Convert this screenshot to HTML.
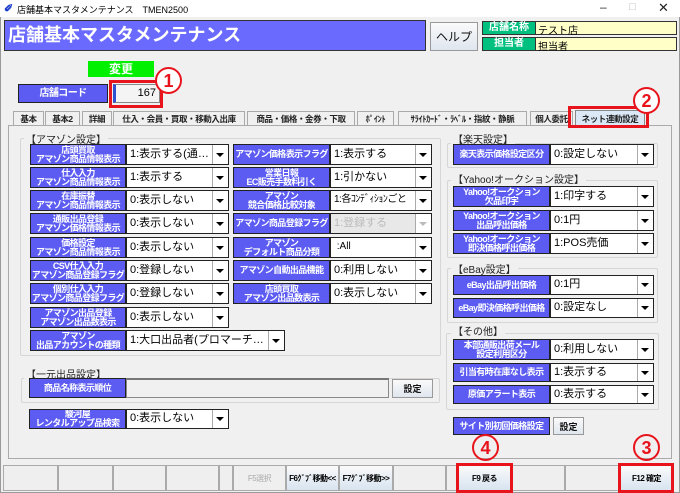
<!DOCTYPE html>
<html><head><meta charset="utf-8">
<style>
*{margin:0;padding:0;box-sizing:border-box}
body{width:680px;height:493px;background:#f0f0f0;font-family:"Liberation Sans","Noto Sans CJK JP",sans-serif;position:relative;overflow:hidden}
.a{position:absolute}
.l{position:absolute;background:#5c5cf2;color:#fff;font-size:9px;line-height:9px;letter-spacing:-0.6px;text-align:center;border:1px solid #222;display:flex;align-items:center;justify-content:center;font-weight:bold;white-space:nowrap;overflow:hidden}
.s{position:absolute;background:#fff;border:1px solid #222;font-size:11px;padding-left:3px;padding-right:16px;color:#000;white-space:nowrap;overflow:hidden;text-overflow:ellipsis;display:block;line-height:18px}
.s::after{content:"";position:absolute;right:0;top:0;bottom:0;width:15px;border-left:1px solid #aaa;background:#fff}
.s b{position:absolute;right:4px;top:50%;margin-top:-2px;width:0;height:0;border-left:4px solid transparent;border-right:4px solid transparent;border-top:4px solid #000;z-index:2}
.g{position:absolute;border:1px solid #d6d6d6;border-radius:2px}
.h{position:absolute;font-size:10px;background:#f0f0f0;padding:0 2px;color:#222}
.btn{position:absolute;background:linear-gradient(#fafafa,#dfe6ee);border:1px solid #999;font-size:9px;font-weight:bold;display:flex;align-items:center;justify-content:center;color:#111}
.fb{position:absolute;top:465px;height:26px;width:54px;border:1px solid #aaa;background:#efefef;font-size:8px;letter-spacing:-0.5px;font-weight:bold;display:flex;align-items:center;justify-content:center;white-space:nowrap;overflow:hidden}
.red{position:absolute;border:3px solid #e8141c}
.c{position:absolute;width:27px;height:27px;border:2.5px solid #e8141c;border-radius:50%;color:#e8141c;font-size:18px;font-weight:bold;display:flex;align-items:center;justify-content:center;background:#fff;line-height:1}
.tab{position:absolute;top:111px;height:15px;border:1px solid #aaa;border-bottom:none;background:#f0f0f0;font-size:8.5px;letter-spacing:-0.4px;font-weight:bold;display:flex;align-items:center;justify-content:center;white-space:nowrap;overflow:hidden;color:#222}
</style></head><body>
<div class="a" style="left:0;top:0;width:680px;height:17px;background:#fff"></div>
<div class="a" style="left:4px;top:2px;font-size:11px;color:#1a3ccc;font-weight:bold">✐</div>
<div class="a" style="left:17px;top:3px;font-size:9px">店舗基本マスタメンテナンス　TMEN2500</div>
<div class="a" style="left:600px;top:0px;font-size:12px;color:#333">–</div>
<div class="a" style="left:629px;top:1px;font-size:11px;color:#bbb">□</div>
<div class="a" style="left:658px;top:0px;font-size:13px;color:#222">✕</div>
<div class="a" style="left:0;top:17px;width:680px;height:476px;border:1px solid #999;border-top:none"></div>
<div class="a" style="left:4px;top:20px;width:422px;height:31px;background:#6a6aff;border:1px solid #333;color:#fff;font-size:18px;font-weight:bold;padding-left:3px;line-height:29px">店舗基本マスタメンテナンス</div>
<div class="btn" style="left:430px;top:22px;width:48px;height:29px;font-size:12px;font-weight:normal">ヘルプ</div>
<div class="a" style="left:482px;top:21px;width:195px;height:14px;background:#ffffc8;border:1px solid #333"></div>
<div class="a" style="left:482px;top:21px;width:54px;height:14px;background:#00c080;color:#fff;font-size:10px;font-weight:bold;text-align:center;line-height:12px;border:1px solid #333">店舗名称</div>
<div class="a" style="left:538px;top:22px;font-size:10px">テスト店</div>
<div class="a" style="left:482px;top:37px;width:195px;height:14px;background:#ffffc8;border:1px solid #333"></div>
<div class="a" style="left:482px;top:37px;width:54px;height:14px;background:#00c080;color:#fff;font-size:10px;font-weight:bold;text-align:center;line-height:12px;border:1px solid #333">担当者</div>
<div class="a" style="left:538px;top:38px;font-size:10px">担当者</div>
<div class="a" style="left:88px;top:61px;width:66px;height:16px;background:#00f000;color:#fff;font-size:12px;font-weight:bold;text-align:center;line-height:16px">変更</div>
<div class="l" style="left:18px;top:84px;width:90px;height:19px;font-size:10px">店舗コード</div>
<div class="a" style="left:113px;top:84px;width:47px;height:19px;background:#f4f4f4;border:1px solid #888;border-left:3px solid #3050d0;font-size:11px;text-align:right;padding-right:3px;line-height:17px">167</div>
<div class="red" style="left:109px;top:80px;width:54px;height:28px"></div>
<div class="c" style="left:155px;top:67px">1</div>
<div class="tab" style="left:13px;width:31px">基本</div>
<div class="tab" style="left:45px;width:35px">基本2</div>
<div class="tab" style="left:82px;width:30px">詳細</div>
<div class="tab" style="left:113px;width:132px">仕入・会員・買取・移動入出庫</div>
<div class="tab" style="left:247px;width:108px">商品・価格・金券・下取</div>
<div class="tab" style="left:357px;width:37px">ﾎﾟｲﾝﾄ</div>
<div class="tab" style="left:398px;width:129px">ｻﾗｲﾄｶｰﾄﾞ・ﾗﾍﾞﾙ・指紋・静脈</div>
<div class="tab" style="left:530px;width:43px">個人委託</div>
<div class="a" style="left:8px;top:125px;width:664px;height:334px;border:1px solid #aaa;background:#f0f0f0"></div>
<div class="tab" style="left:575px;top:110px;width:70px;height:17px;background:#dbe9f7;border-color:#888">ネット連動設定</div>
<div class="red" style="left:568px;top:106px;width:81px;height:22px"></div>
<div class="c" style="left:633px;top:87px">2</div>
<div class="g" style="left:20px;top:138px;width:421px;height:218px"></div>
<div class="h" style="left:24px;top:131px">【アマゾン設定】</div>

<div class="l" style="left:30px;top:144px;width:96px;height:21px">店頭買取<br>アマゾン商品情報表示</div><div class="s" style="left:126px;top:144px;width:103px;height:21px">1:表示する(通常...<b></b></div>
<div class="l" style="left:233px;top:144px;width:97px;height:21px">アマゾン価格表示フラグ</div><div class="s" style="left:330px;top:144px;width:102px;height:21px">1:表示する<b></b></div>
<div class="l" style="left:30px;top:167px;width:96px;height:21px">仕入入力<br>アマゾン商品情報表示</div><div class="s" style="left:126px;top:167px;width:103px;height:21px">1:表示する<b></b></div>
<div class="l" style="left:233px;top:167px;width:97px;height:21px">営業日報<br>EC販売手数料引く</div><div class="s" style="left:330px;top:167px;width:102px;height:21px">1:引かない<b></b></div>
<div class="l" style="left:30px;top:190px;width:96px;height:21px">在庫振替<br>アマゾン商品情報表示</div><div class="s" style="left:126px;top:190px;width:103px;height:21px">0:表示しない<b></b></div>
<div class="l" style="left:233px;top:190px;width:97px;height:21px">アマゾン<br>競合価格比較対象</div><div class="s" style="left:330px;top:190px;width:102px;height:21px;font-size:10px;letter-spacing:-0.5px">1:各ｺﾝﾃﾞｨｼｮﾝごと<b></b></div>
<div class="l" style="left:30px;top:213px;width:96px;height:21px">通販出品登録<br>アマゾン価格情報表示</div><div class="s" style="left:126px;top:213px;width:103px;height:21px">0:表示しない<b></b></div>
<div class="l" style="left:233px;top:213px;width:97px;height:21px">アマゾン商品登録フラグ</div><div class="s" style="left:330px;top:213px;width:102px;height:21px;background:#e8e8e8;color:#bbb">1:登録する<b style="border-top-color:#bbb"></b></div>
<div class="l" style="left:30px;top:237px;width:96px;height:21px">価格設定<br>アマゾン商品情報表示</div><div class="s" style="left:126px;top:237px;width:103px;height:21px">0:表示しない<b></b></div>
<div class="l" style="left:233px;top:237px;width:97px;height:21px">アマゾン<br>デフォルト商品分類</div><div class="s" style="left:330px;top:237px;width:102px;height:21px;font-size:10px">&nbsp;:All<b></b></div>
<div class="l" style="left:30px;top:260px;width:96px;height:21px">CSV仕入入力<br>アマゾン商品登録フラグ</div><div class="s" style="left:126px;top:260px;width:103px;height:21px">0:登録しない<b></b></div>
<div class="l" style="left:233px;top:260px;width:97px;height:21px">アマゾン自動出品機能</div><div class="s" style="left:330px;top:260px;width:102px;height:21px">0:利用しない<b></b></div>
<div class="l" style="left:30px;top:283px;width:96px;height:21px">個別仕入入力<br>アマゾン商品登録フラグ</div><div class="s" style="left:126px;top:283px;width:103px;height:21px">0:登録しない<b></b></div>
<div class="l" style="left:233px;top:283px;width:97px;height:21px">店頭買取<br>アマゾン出品数表示</div><div class="s" style="left:330px;top:283px;width:102px;height:21px">0:表示しない<b></b></div>
<div class="l" style="left:30px;top:307px;width:96px;height:21px">アマゾン出品登録<br>アマゾン出品数表示</div><div class="s" style="left:126px;top:307px;width:103px;height:21px">0:表示しない<b></b></div>
<div class="l" style="left:30px;top:330px;width:96px;height:21px">アマゾン<br>出品アカウントの種類</div><div class="s" style="left:126px;top:330px;width:159px;height:21px">1:大口出品者(プロマーチャント)<b></b></div>

<div class="g" style="left:21px;top:378px;width:419px;height:25px"></div>
<div class="h" style="left:24px;top:366px">【一元出品設定】</div>
<div class="l" style="left:29px;top:378px;width:97px;height:20px">商品名称表示順位</div>
<div class="a" style="left:126px;top:378px;width:263px;height:20px;background:#f0f0f0;border:1px solid #888;border-top:2px solid #777"></div>
<div class="btn" style="left:392px;top:379px;width:41px;height:19px">設定</div>
<div class="l" style="left:29px;top:409px;width:97px;height:20px">駿河屋<br>レンタルアップ品検索</div><div class="s" style="left:126px;top:409px;width:103px;height:20px;line-height:17px">0:表示しない<b></b></div>

<div class="g" style="left:447px;top:143px;width:211px;height:25px"></div>
<div class="h" style="left:451px;top:131px">【楽天設定】</div>
<div class="l" style="left:453px;top:144px;width:97px;height:21px">楽天表示価格設定区分</div><div class="s" style="left:550px;top:144px;width:104px;height:21px">0:設定しない<b></b></div>

<div class="g" style="left:447px;top:180px;width:211px;height:78px"></div>
<div class="h" style="left:451px;top:171px">【Yahoo!オークション設定】</div>
<div class="l" style="left:453px;top:186px;width:97px;height:21px">Yahoo!オークション<br>欠品印字</div><div class="s" style="left:550px;top:186px;width:104px;height:21px">1:印字する<b></b></div>
<div class="l" style="left:453px;top:210px;width:97px;height:21px">Yahoo!オークション<br>出品呼出価格</div><div class="s" style="left:550px;top:210px;width:104px;height:21px">0:1円<b></b></div>
<div class="l" style="left:453px;top:233px;width:97px;height:21px">Yahoo!オークション<br>即決価格呼出価格</div><div class="s" style="left:550px;top:233px;width:104px;height:21px">1:POS売価<b></b></div>

<div class="g" style="left:447px;top:268px;width:211px;height:55px"></div>
<div class="h" style="left:451px;top:261px">【eBay設定】</div>
<div class="l" style="left:453px;top:275px;width:97px;height:20px">eBay出品呼出価格</div><div class="s" style="left:550px;top:275px;width:104px;height:20px;line-height:17px">0:1円<b></b></div>
<div class="l" style="left:453px;top:298px;width:97px;height:20px">eBay即決価格呼出価格</div><div class="s" style="left:550px;top:298px;width:104px;height:20px;line-height:17px">0:設定なし<b></b></div>

<div class="g" style="left:446px;top:333px;width:213px;height:77px"></div>
<div class="h" style="left:451px;top:323px">【その他】</div>
<div class="l" style="left:453px;top:339px;width:97px;height:21px">本部通販出荷メール<br>設定利用区分</div><div class="s" style="left:550px;top:339px;width:104px;height:21px">0:利用しない<b></b></div>
<div class="l" style="left:453px;top:363px;width:97px;height:19px">引当有時在庫なし表示</div><div class="s" style="left:550px;top:363px;width:104px;height:19px;line-height:16px">1:表示する<b></b></div>
<div class="l" style="left:453px;top:385px;width:97px;height:19px">原価アラート表示</div><div class="s" style="left:550px;top:385px;width:104px;height:19px;line-height:16px">0:表示する<b></b></div>
<div class="l" style="left:453px;top:417px;width:97px;height:18px">サイト別初回価格設定</div>
<div class="btn" style="left:553px;top:417px;width:31px;height:18px">設定</div>

<div class="fb" style="left:3px;width:55px"></div>
<div class="fb" style="left:58px;width:55px"></div>
<div class="fb" style="left:113px;width:53px"></div>
<div class="fb" style="left:166px;width:53px"></div>
<div class="fb" style="left:219px;width:14px"></div>
<div class="fb" style="left:233px;width:53px;color:#aaa;font-weight:normal">F5選択</div>
<div class="fb" style="left:286px;width:53px;background:linear-gradient(#fafafa,#d8e4f0)">F6ｸﾞﾌﾞ移動&lt;&lt;</div>
<div class="fb" style="left:339px;width:54px;background:linear-gradient(#fafafa,#d8e4f0)">F7ｸﾞﾌﾞ移動&gt;&gt;</div>
<div class="fb" style="left:393px;width:53px"></div>
<div class="fb" style="left:446px;width:12px"></div>
<div class="fb" style="left:458px;width:53px;background:linear-gradient(#fafafa,#d8e4f0)">F9 戻る</div>
<div class="fb" style="left:511px;width:54px"></div>
<div class="fb" style="left:565px;width:55px"></div>
<div class="fb" style="left:620px;width:53px;background:linear-gradient(#fafafa,#d8e4f0)">F12 確定</div>
<div class="red" style="left:456px;top:463px;width:57px;height:30px"></div>
<div class="red" style="left:618px;top:463px;width:56px;height:30px"></div>
<div class="c" style="left:472px;top:434px;background:transparent">4</div>
<div class="c" style="left:633px;top:434px;background:transparent">3</div>
</body></html>
